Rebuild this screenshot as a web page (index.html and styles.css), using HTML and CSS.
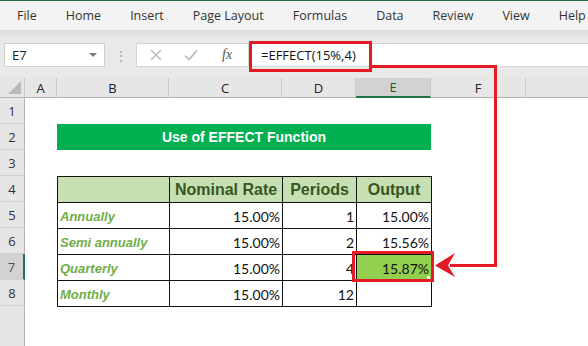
FILE: index.html
```html
<!DOCTYPE html>
<html>
<head>
<meta charset="utf-8">
<link rel="stylesheet" href="styles.css">
</head>
<body>
<div class="page">
  <nav class="menubar">
    <span class="mi">File</span>
    <span class="mi">Home</span>
    <span class="mi">Insert</span>
    <span class="mi">Page Layout</span>
    <span class="mi">Formulas</span>
    <span class="mi">Data</span>
    <span class="mi">Review</span>
    <span class="mi">View</span>
    <span class="mi">Help</span>
  </nav>
  <div class="formulabar">
    <div class="namebox"><span>E7</span><span class="caret"></span></div>
    <div class="dots">⋮</div>
    <div class="fxbox">
      <svg class="ic" width="12" height="12" viewBox="0 0 12 12"><path d="M1 1 L11 11 M11 1 L1 11" stroke="#b8b8b8" stroke-width="1.4" fill="none"/></svg>
      <svg class="ic" width="14" height="12" viewBox="0 0 14 12"><path d="M1 6.5 L5 10.5 L13 1.5" stroke="#b8b8b8" stroke-width="1.6" fill="none"/></svg>
      <span class="fx">fx</span>
    </div>
    <div class="input">=EFFECT(15%,4)</div>
  </div>
  <div class="sheet">
    <div class="corner"><span class="tri"></span></div>
    <div class="ch">A</div>
    <div class="ch">B</div>
    <div class="ch">C</div>
    <div class="ch">D</div>
    <div class="ch sel">E</div>
    <div class="ch">F</div>
    <div class="ch last"></div>

    <div class="rh r1">1</div>
    <div class="rh r2">2</div>
    <div class="rh r3">3</div>
    <div class="rh r4">4</div>
    <div class="rh r5">5</div>
    <div class="rh r6">6</div>
    <div class="rh r7 sel">7</div>
    <div class="rh r8">8</div>
    <div class="rh r9"></div>

    <div class="title">Use of EFFECT Function</div>

    <div class="tbl">
      <div class="hd"></div>
      <div class="hd">Nominal Rate</div>
      <div class="hd">Periods</div>
      <div class="hd">Output</div>

      <div class="lb">Annually</div>
      <div class="num">15.00%</div>
      <div class="num">1</div>
      <div class="num">15.00%</div>

      <div class="lb">Semi annually</div>
      <div class="num">15.00%</div>
      <div class="num">2</div>
      <div class="num">15.56%</div>

      <div class="lb">Quarterly</div>
      <div class="num">15.00%</div>
      <div class="num">4</div>
      <div class="num out">15.87%<span class="handle"></span></div>

      <div class="lb">Monthly</div>
      <div class="num">15.00%</div>
      <div class="num">12</div>
      <div class="num"></div>
    </div>
  </div>

  <svg class="overlay" width="588" height="346" viewBox="0 0 588 346">
    <rect x="250.5" y="42.5" width="120" height="28" fill="none" stroke="#e21b24" stroke-width="3"/>
    <polyline points="372,66.5 495.5,66.5 495.5,265.5 450,265.5" fill="none" stroke="#e21b24" stroke-width="3"/>
    <polygon points="435,265.5 455,253 448,265.5 455,277" fill="#e21b24"/>
    <rect x="353.5" y="252.5" width="79" height="28" fill="none" stroke="#e21b24" stroke-width="3"/>
  </svg>
</div>
</body>
</html>
```

FILE: styles.css
```css
* { box-sizing: border-box; }
html, body { margin: 0; padding: 0; }
body {
  width: 588px;
  height: 346px;
  overflow: hidden;
  background: #fff;
  font-family: "Open Sans", "Liberation Sans", sans-serif;
}
.page {
  position: relative;
  width: 588px;
  height: 346px;
  display: flex;
  flex-direction: column;
}
.menubar {
  height: 30px;
  flex: none;
  background: #f3f3f3;
  border-top: 1px solid #1e6b41;
  display: flex;
  align-items: center;
  padding-left: 17px;
  gap: 29px;
  font-size: 12.5px;
  color: #333;
  white-space: nowrap;
}
.mi { flex: none; }
.formulabar {
  height: 48px;
  flex: none;
  background: linear-gradient(#dcdcdc 0px, #e9e9e9 8px, #e9e9e9 100%);
  display: flex;
  align-items: flex-start;
  padding-top: 13px;
  padding-left: 4px;
}
.namebox {
  width: 101px;
  height: 24px;
  background: #fff;
  border: 1px solid #cfcfcf;
  display: flex;
  align-items: center;
  justify-content: space-between;
  padding: 0 7px 0 7px;
  font-size: 13px;
  color: #222;
}
.caret {
  width: 0;
  height: 0;
  border-left: 4px solid transparent;
  border-right: 4px solid transparent;
  border-top: 4px solid #777;
}
.dots {
  width: 31px;
  height: 24px;
  display: flex;
  align-items: center;
  justify-content: center;
  color: #aaa;
  font-size: 14px;
}
.fxbox {
  width: 112px;
  height: 24px;
  background: #fff;
  border: 1px solid #d6d6d6;
  border-right: none;
  display: flex;
  align-items: center;
  padding-left: 13px;
  gap: 22px;
}
.fx {
  font-family: "Liberation Serif", serif;
  font-style: italic;
  font-size: 14px;
  color: #555;
  margin-left: 2px;
}
.input {
  flex: 1;
  height: 24px;
  background: #fff;
  border: 1px solid #d6d6d6;
  border-right: none;
  display: flex;
  align-items: center;
  padding-left: 12px;
  font-size: 13px;
  color: #111;
}
.sheet {
  flex: 1;
  display: grid;
  grid-template-columns: 25px 32px 112px 113px 74px 75px 95px 1fr;
  grid-template-rows: 20px repeat(8, 26px) 1fr;
  font-size: 13px;
}
.corner {
  background: #e6e6e6;
  border-right: 1px solid #c9c9c9;
  border-bottom: 1px solid #b5b5b5;
  position: relative;
}
.tri {
  position: absolute;
  right: 3px;
  bottom: 3px;
  width: 0;
  height: 0;
  border-left: 13px solid transparent;
  border-bottom: 13px solid #b9b9b9;
}
.ch {
  background: #e6e6e6;
  border-right: 1px solid #c9c9c9;
  border-bottom: 1px solid #b5b5b5;
  display: flex;
  align-items: center;
  justify-content: center;
  color: #222;
  font-size: 13px;
}
.ch.last { border-right: none; }
.ch.sel {
  background: #d2d2d2;
  border-bottom: 2px solid #217346;
  color: #1f5a36;
}
.rh {
  grid-column: 1;
  background: #e6e6e6;
  border-right: 1px solid #b5b5b5;
  border-bottom: 1px solid #d2d2d2;
  display: flex;
  align-items: center;
  justify-content: center;
  color: #333;
  font-size: 13px;
}
.rh.sel {
  background: #d2d2d2;
  border-right: 2px solid #217346;
  color: #3b5a47;
}
.rh.r9 { border-bottom: none; }
.title {
  grid-column: 3 / 7;
  grid-row: 3;
  background: #00b050;
  color: #fff;
  font-family: "Liberation Sans", Arial, sans-serif;
  font-weight: bold;
  font-size: 14px;
  display: flex;
  align-items: center;
  justify-content: center;
}
.tbl {
  grid-column: 3 / 7;
  grid-row: 5 / 10;
  justify-self: start;
  align-self: start;
  display: grid;
  grid-template-columns: 112px 113px 74px 75px;
  grid-template-rows: repeat(5, 26px);
  border-left: 1px solid #111;
  border-top: 1px solid #111;
}
.tbl > div {
  border-right: 1px solid #111;
  border-bottom: 1px solid #111;
  display: flex;
  align-items: center;
}
.hd {
  background: #c6e0b4;
  color: #375623;
  font-family: "Liberation Sans", Arial, sans-serif;
  font-weight: bold;
  font-size: 16px;
  justify-content: center;
}
.lb {
  color: #70ad47;
  font-family: "Liberation Sans", Arial, sans-serif;
  font-weight: bold;
  font-style: italic;
  font-size: 13px;
  padding-left: 2px;
  padding-top: 2px;
}
.num {
  justify-content: flex-end;
  padding-right: 2px;
  padding-top: 2px;
  font-family: "Lato", "Liberation Sans", sans-serif;
  font-size: 14px;
  color: #111;
}
.num.out {
  background: #92d050;
  position: relative;
}
.handle {
  position: absolute;
  right: 1px;
  bottom: 1px;
  width: 3px;
  height: 3px;
  background: #fff;
}
.overlay {
  position: absolute;
  left: 0;
  top: 0;
  pointer-events: none;
}
```
